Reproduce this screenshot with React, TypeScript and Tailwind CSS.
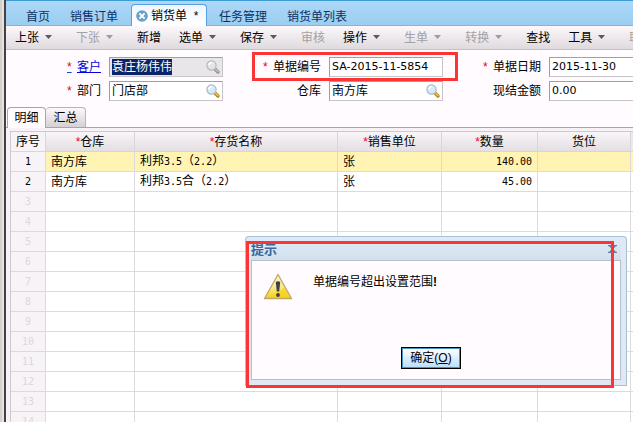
import { useEffect, useRef } from "react";

type Tool = { label: string; menu?: boolean; disabled?: boolean };

const tools: Tool[] = [
  { label: "上张", menu: true },
  { label: "下张", menu: true, disabled: true },
  { label: "新增" },
  { label: "选单", menu: true },
  { label: "保存", menu: true },
  { label: "审核", disabled: true },
  { label: "操作", menu: true },
  { label: "生单", menu: true, disabled: true },
  { label: "转换", menu: true, disabled: true },
  { label: "查找" },
  { label: "工具", menu: true },
  { label: "联查", menu: true, disabled: true },
];

const columns = [
  { title: "仓库", required: true },
  { title: "存货名称", required: true },
  { title: "销售单位", required: true },
  { title: "数量", required: true },
  { title: "货位", required: false },
];

const items = [
  ["南方库", "利邦3.5（2.2）", "张", "140.00", ""],
  ["南方库", "利邦3.5合（2.2）", "张", "45.00", ""],
];

const rowNumbers = Array.from({ length: 14 }, (_, i) => i + 1);

function Magnifier({ muted }: { muted?: boolean }) {
  return (
    <svg viewBox="0 0 14 14" className="size-[14px]" aria-hidden="true">
      <path d="M9 9 L12 12" stroke={muted ? "#8c8c8c" : "#a87a1c"} strokeWidth="3.2" strokeLinecap="round" />
      <path d="M9 8.6 L12 11.6" stroke={muted ? "#bdbdbd" : "#edc040"} strokeWidth="1.8" strokeLinecap="round" />
      <circle cx="5.5" cy="5.5" r="4.6" fill={muted ? "#e2e4e5" : "#d6eafa"} stroke={muted ? "#b4b8bb" : "#a9b8ca"} strokeWidth="1.2" />
      <path d="M2.8 5.2 Q3.4 2.7 6.2 2.6" fill="none" stroke="#fff" strokeWidth="1.5" />
    </svg>
  );
}

function WarningIcon() {
  return (
    <svg viewBox="0 0 30 27" className="h-[27px] w-[30px] shrink-0" aria-hidden="true">
      <defs>
        <linearGradient id="warn" x1="0" y1="0" x2="0" y2="1">
          <stop offset="0" stopColor="#fdf6cf" />
          <stop offset="0.55" stopColor="#f8e988" />
          <stop offset="1" stopColor="#f6cf12" />
        </linearGradient>
      </defs>
      <path d="M15 1.5 L28.5 25.5 H1.5 Z" fill="url(#warn)" stroke="#c0a46a" strokeWidth="1.3" strokeLinejoin="round" />
      <path d="M3.5 24.4 Q15 22 21 14 L26.8 24.4 Z" fill="#f7d21c" opacity="0.7" />
      <path d="M12.8 9 Q15 7.4 17.2 9 L16.2 18.5 H13.8 Z" fill="#3f3f46" />
      <circle cx="15" cy="22" r="1.9" fill="#3f3f46" />
    </svg>
  );
}

type FieldProps = {
  id: string;
  label: string;
  value: string;
  required?: boolean;
  link?: boolean;
  search?: boolean;
  muted?: boolean;
  marked?: boolean;
  selected?: boolean;
};

function Field({ id, label, value, required, link, search, muted, marked, selected }: FieldProps) {
  const ref = useRef<HTMLInputElement>(null);
  useEffect(() => {
    if (selected) {
      ref.current?.focus();
      ref.current?.select();
    }
  }, [selected]);
  return (
    <div className="relative flex shrink-0 items-center gap-2">
      <label htmlFor={id} className="flex w-[92px] justify-end whitespace-nowrap">
        {required && <span className={link ? "mr-1 w-[6px] text-[#e8002c] underline decoration-blue-700" : "mr-1 w-[6px] text-[#e8002c]"}>*</span>}
        {link ? <a href="#customer" className="text-[#0000e0] underline">{label}</a> : label}
      </label>
      <div className={`flex h-5 w-[114px] items-center border border-[#c8c4c8] border-t-[#a0a0a0] border-l-[#a0a0a0] pr-[2px] pl-[2px] ${muted ? "bg-[#e8e6e8]" : "bg-white"}`}>
        <input
          ref={ref}
          id={id}
          defaultValue={value}
          className={`min-w-0 flex-1 bg-transparent font-['DejaVu_Sans','Noto_Sans_CJK_SC',sans-serif] leading-4 outline-none selection:bg-[#0a246a] selection:text-white ${search ? "text-xs" : "text-[11px]"}`}
        />
        {search && (
          <button type="button" aria-label={`查找${label}`}>
            <Magnifier muted={muted} />
          </button>
        )}
      </div>
      {marked && <div className="pointer-events-none absolute -top-[5px] -right-[15px] -bottom-1 left-[23px] border-3 border-[#fb3535]" />}
    </div>
  );
}

export default function App() {
  return (
    <div className="flex h-screen overflow-hidden bg-white font-['Liberation_Sans','Noto_Sans_CJK_SC',sans-serif] text-xs leading-4 text-black">
      <div className="w-[6px] shrink-0 border-r-2 border-l-2 border-r-[#444044] border-l-[#d4d0cc] bg-[#e6e2de]" />
      <main className="relative flex min-w-0 flex-1 flex-col overflow-hidden bg-[#fffbff]">
        <nav className="flex h-[26px] shrink-0 items-end border-t border-t-[#3c9bd2] border-b border-b-[#80b4e4] bg-linear-to-b from-[#acd8f8] to-[#9ccdf0] whitespace-nowrap text-[#0b3264]">
          <a href="#home" className="ml-5">首页</a>
          <a href="#orders" className="ml-5">销售订单</a>
          <div className="-mb-px ml-[13px] flex h-[22px] w-[76px] items-center gap-[3px] rounded-t-sm border border-b-0 border-[#5c9fe0] bg-linear-to-b from-[#eef6ff] to-white pl-1 text-black">
            <button type="button" aria-label="关闭销货单" className="shrink-0">
              <svg viewBox="0 0 12 12" className="size-3" aria-hidden="true">
                <circle cx="6" cy="6" r="5.8" fill="#6a9fc6" />
                <path d="M3.4 3.4 L8.6 8.6 M8.6 3.4 L3.4 8.6" stroke="#fff" strokeWidth="2" />
              </svg>
            </button>
            <a href="#sales">销货单&nbsp; *</a>
          </div>
          <a href="#tasks" className="ml-3">任务管理</a>
          <a href="#list" className="ml-5">销货单列表</a>
        </nav>

        <div className="flex h-6 shrink-0 items-center border-b border-[#c4c0c4] bg-linear-to-b from-[#fcf8fc] to-[#dedade] pl-[9px]">
          {tools.map((t) => (
            <button
              key={t.label}
              type="button"
              disabled={t.disabled}
              className={`flex shrink-0 items-center gap-[6px] ${t.menu ? "pr-6" : "pr-[18px]"} ${t.disabled ? "text-[#a4a0a4]" : "text-black"}`}
            >
              {t.label}
              {t.menu && (
                <svg viewBox="0 0 7 4" className="mb-[2px] h-1 w-[7px]" aria-hidden="true">
                  <path d="M0 0 H7 L3.5 4 Z" fill={t.disabled ? "#a09ca0" : "#5c585c"} />
                </svg>
              )}
            </button>
          ))}
        </div>

        <form className="flex shrink-0 flex-col gap-1 pt-[7px] pb-[6px] pl-[3px]">
          <div className="flex gap-[6px]">
            <Field id="customer" label="客户" value="袁庄杨伟伟" required link search muted selected />
            <Field id="number" label="单据编号" value="SA-2015-11-5854" required marked />
            <Field id="date" label="单据日期" value="2015-11-30" required />
          </div>
          <div className="flex gap-[6px]">
            <Field id="department" label="部门" value="门店部" required search />
            <Field id="warehouse" label="仓库" value="南方库" search />
            <Field id="amount" label="现结金额" value="0.00" />
          </div>
        </form>

        <div className="flex h-[21px] shrink-0 items-end border-b border-[#a8a4a8]">
          <button type="button" className="-mb-px ml-px h-[21px] w-[39px] rounded-t-sm border border-b-0 border-[#a8a4a8] bg-[#fffbff]">明细</button>
          <button type="button" className="h-5 w-10 rounded-t-sm border border-b-0 border-l-0 border-[#b8b4b8] bg-linear-to-b from-[#fcf8fc] to-[#d4d0d4]">汇总</button>
        </div>

        <div className="min-h-0 flex-1 overflow-hidden bg-[#f6f2f6] pt-[3px] pl-1">
          <table className="w-full table-fixed border-separate border-spacing-0 border-t border-l border-[#cccacc] bg-white">
            <colgroup>
              <col className="w-[35px]" />
              <col className="w-[89px]" />
              <col className="w-[203px]" />
              <col className="w-[104px]" />
              <col className="w-24" />
              <col className="w-[93px]" />
              <col />
            </colgroup>
            <thead>
              <tr className="h-5">
                <th className="border-r border-b border-[#d8d6d8] bg-[#f7f3f7] p-0 font-normal">序号</th>
                {columns.map((c) => (
                  <th key={c.title} className="border-r border-b border-[#d8d6d8] bg-linear-to-b from-[#f9f5f9] to-[#e2dee2] p-0 font-normal">
                    {c.required && <span className="text-[#f0002c]">*</span>}
                    {c.title}
                  </th>
                ))}
                <th className="border-b border-[#d8d6d8] bg-[#ece8ec] p-0" />
              </tr>
            </thead>
            <tbody className="font-['DejaVu_Sans_Mono','Noto_Sans_CJK_SC',monospace]">
              {rowNumbers.map((n) => (
                <tr key={n} className={n === 1 ? "h-5 bg-[#fff4b4]" : "h-5"}>
                  <td className={`border-r border-b border-[#dcdadc] bg-[#f7f3f7] p-0 text-center text-[10px] ${n > 2 ? "text-[#dcd8dc]" : ""}`}>{n}</td>
                  {columns.map((c, i) => (
                    <td key={c.title} className={`border-r border-b border-[#dcdadc] px-[5px] py-0 whitespace-nowrap ${i === 3 ? "text-right text-[10px]" : ""}`}>
                      {(items[n - 1]?.[i] ?? "").split(/([\d.]+)/).map((part, k) => (
                        <span key={k} className={k % 2 ? "text-[10px]" : ""}>{part}</span>
                      ))}
                    </td>
                  ))}
                  <td className="border-b border-[#dcdadc] p-0" />
                </tr>
              ))}
            </tbody>
          </table>
        </div>

        <div role="dialog" aria-label="提示" className="absolute top-[236px] left-[239px] flex h-[150px] w-[382px] flex-col rounded-t-sm border border-[#a4c4d4] border-b-[#88cce8] bg-[#e0e8f6] px-[5px] pb-[5px]">
          <div className="flex h-[23px] shrink-0 items-center justify-between bg-linear-to-b from-[#e0eafa] to-[#d2e0ec] pr-1 text-[13px] font-bold text-[#3a6699]">
            <span className="pt-[2px]">提示</span>
            <button type="button" aria-label="关闭">
              <svg viewBox="0 0 9 8" className="h-2 w-[9px]" aria-hidden="true">
                <path d="M0 .5 H3.5 M5.5 .5 H9 M0 7.5 H3.5 M5.5 7.5 H9 M1.5 .5 L7.5 7.5 M7.5 .5 L1.5 7.5" stroke="#6b7f99" strokeWidth="1.3" />
              </svg>
            </button>
          </div>
          <div className="flex flex-1 flex-col items-center justify-between border border-[#b4c0cc] bg-[#fffbff] pt-3 pb-[10px]">
            <div className="flex gap-5 self-stretch pl-[11px]">
              <WarningIcon />
              <p className="pt-px">单据编号超出设置范围<b>!</b></p>
            </div>
            <button type="button" className="mr-[10px] h-[22px] w-[60px] border border-black bg-linear-to-b from-white to-[#b8defc] shadow-[inset_0_0_0_1px_#4c94bc]">
              确定(<u>O</u>)
            </button>
          </div>
        </div>
        <div className="pointer-events-none absolute top-[241px] left-60 h-[147px] w-[368px] border-3 border-[#fb3535]" />
      </main>
    </div>
  );
}
